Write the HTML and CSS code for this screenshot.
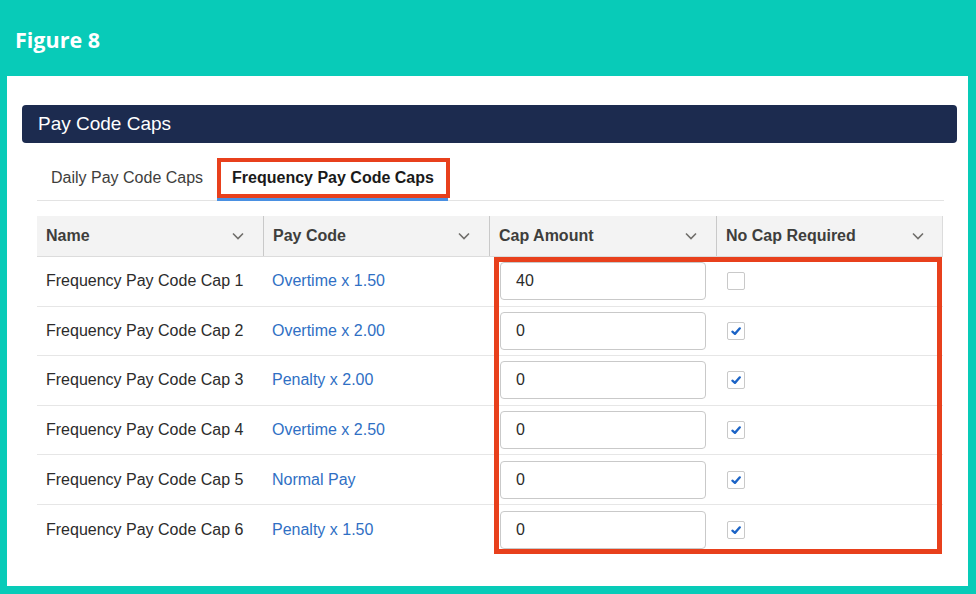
FILE: index.html
```html
<!DOCTYPE html>
<html>
<head>
<meta charset="utf-8">
<link rel="stylesheet" href="styles.css">
</head>
<body>
<div class="frame">
  <div class="figure-header">Figure 8</div>
  <div class="card">
    <div class="title-bar">Pay Code Caps</div>
    <div class="tabs">
      <div class="tab">Daily Pay Code Caps</div>
      <div class="tab tab-active"><span class="tab-label">Frequency Pay Code Caps</span></div>
    </div>
    <div class="table">
      <div class="thead">
        <div class="th"><span>Name</span><svg class="chev" viewBox="0 0 12 8"><path d="M1 1.5 L6 6.5 L11 1.5"/></svg></div>
        <div class="th"><span>Pay Code</span><svg class="chev" viewBox="0 0 12 8"><path d="M1 1.5 L6 6.5 L11 1.5"/></svg></div>
        <div class="th"><span>Cap Amount</span><svg class="chev" viewBox="0 0 12 8"><path d="M1 1.5 L6 6.5 L11 1.5"/></svg></div>
        <div class="th"><span>No Cap Required</span><svg class="chev" viewBox="0 0 12 8"><path d="M1 1.5 L6 6.5 L11 1.5"/></svg></div>
      </div>
      <div class="tbody">
        <div class="tr">
          <div class="td">Frequency Pay Code Cap 1</div>
          <div class="td link">Overtime x 1.50</div>
          <div class="td"><div class="input">40</div></div>
          <div class="td"><span class="cb"></span></div>
        </div>
        <div class="tr">
          <div class="td">Frequency Pay Code Cap 2</div>
          <div class="td link">Overtime x 2.00</div>
          <div class="td"><div class="input">0</div></div>
          <div class="td"><span class="cb"><svg viewBox="0 0 10 10"><path d="M2 5.6 L4.1 7.4 L8.2 2.8"/></svg></span></div>
        </div>
        <div class="tr">
          <div class="td">Frequency Pay Code Cap 3</div>
          <div class="td link">Penalty x 2.00</div>
          <div class="td"><div class="input">0</div></div>
          <div class="td"><span class="cb"><svg viewBox="0 0 10 10"><path d="M2 5.6 L4.1 7.4 L8.2 2.8"/></svg></span></div>
        </div>
        <div class="tr">
          <div class="td">Frequency Pay Code Cap 4</div>
          <div class="td link">Overtime x 2.50</div>
          <div class="td"><div class="input">0</div></div>
          <div class="td"><span class="cb"><svg viewBox="0 0 10 10"><path d="M2 5.6 L4.1 7.4 L8.2 2.8"/></svg></span></div>
        </div>
        <div class="tr">
          <div class="td">Frequency Pay Code Cap 5</div>
          <div class="td link">Normal Pay</div>
          <div class="td"><div class="input">0</div></div>
          <div class="td"><span class="cb"><svg viewBox="0 0 10 10"><path d="M2 5.6 L4.1 7.4 L8.2 2.8"/></svg></span></div>
        </div>
        <div class="tr last">
          <div class="td">Frequency Pay Code Cap 6</div>
          <div class="td link">Penalty x 1.50</div>
          <div class="td"><div class="input">0</div></div>
          <div class="td"><span class="cb"><svg viewBox="0 0 10 10"><path d="M2 5.6 L4.1 7.4 L8.2 2.8"/></svg></span></div>
        </div>
        <div class="highlight"></div>
      </div>
    </div>
  </div>
</div>
</body>
</html>
```
FILE: styles.css
```css
html, body {
  margin: 0;
  padding: 0;
}
body {
  background: #08cbb8;
  font-family: "Liberation Sans", Arial, sans-serif;
  color: #2b2b2b;
}
.frame {
  width: 976px;
  height: 594px;
  box-sizing: border-box;
  padding: 0 8px 8px 7px;
  display: flex;
  flex-direction: column;
  background: #08cbb8;
}
.figure-header {
  height: 76px;
  flex: none;
  box-sizing: border-box;
  padding: 26px 0 0 8px;
  font-family: "Open Sans", sans-serif;
  font-weight: 700;
  font-size: 21.5px;
  line-height: 28px;
  color: #ffffff;
}
.card {
  flex: 1;
  background: #ffffff;
  padding: 29px 11px 0 15px;
}
.title-bar {
  height: 38px;
  background: #1c2b4f;
  border-radius: 4px;
  box-sizing: border-box;
  padding-left: 16px;
  font-size: 19px;
  line-height: 38px;
  color: #ffffff;
}
.tabs {
  margin: 0 13px 0 15px;
  height: 58px;
  box-sizing: border-box;
  padding-top: 15px;
  display: flex;
  align-items: flex-start;
  gap: 14px;
  box-shadow: inset 0 -1px 0 #e3e3e3;
}
.tab {
  height: 40px;
  line-height: 40px;
  font-size: 16px;
  color: #3e3e3c;
  padding-left: 14px;
}
.tab-active {
  padding-left: 0;
  height: 43px;
  display: flex;
  flex-direction: column;
}
.tab-label {
  display: block;
  height: 40px;
  box-sizing: border-box;
  border: 4px solid #e8401c;
  padding: 0 12px 0 11px;
  line-height: 32px;
  font-weight: 700;
  color: #1a1a1a;
}
.tab-active::after {
  content: "";
  display: block;
  height: 3px;
  background: #4a90e2;
  margin-right: 2px;
}
.table {
  margin: 15px 14px 0 15px;
}
.thead {
  display: grid;
  grid-template-columns: 226px 226px 227px 227px;
  height: 41px;
  background: #f3f3f3;
  border-bottom: 1px solid #dcdcdc;
  box-sizing: border-box;
}
.th {
  display: flex;
  align-items: center;
  justify-content: space-between;
  padding: 0 19px 0 9px;
  font-size: 16px;
  font-weight: 700;
  color: #3e3e3c;
  border-left: 1px solid #c9c9c9;
}
.th:first-child {
  border-left: none;
}
.th:last-child {
  border-right: 1px solid #dcdcdc;
  padding-right: 18px;
}
.chev {
  width: 12px;
  height: 8px;
  fill: none;
  stroke: #706e6b;
  stroke-width: 1.6;
}
.tbody {
  position: relative;
}
.tr {
  display: grid;
  grid-template-columns: 226px 226px 227px 227px;
  height: 49.6px;
  box-sizing: border-box;
  border-bottom: 1px solid #e6e6e6;
}
.tr.last {
  border-bottom: none;
}
.td {
  display: flex;
  align-items: center;
  padding-left: 9px;
  font-size: 16px;
  color: #2b2b2b;
}
.td.link {
  color: #2f6fc4;
}
.td:nth-child(3), .td:nth-child(4) {
  padding-left: 11px;
}
.input {
  width: 206px;
  height: 38px;
  box-sizing: border-box;
  border: 1px solid #c9c9c9;
  border-radius: 4px;
  padding-left: 15px;
  line-height: 36px;
  font-size: 16px;
  color: #2b2b2b;
  background: #ffffff;
}
.cb {
  width: 18px;
  height: 18px;
  box-sizing: border-box;
  border: 1px solid #c9c9c9;
  border-radius: 2px;
  display: flex;
  align-items: center;
  justify-content: center;
  background: #ffffff;
}
.cb svg {
  width: 12px;
  height: 12px;
  fill: none;
  stroke: #1b63c6;
  stroke-width: 1.9;
  stroke-linecap: round;
  stroke-linejoin: round;
}
.highlight {
  position: absolute;
  left: 457px;
  top: 0;
  width: 448px;
  height: 297px;
  box-sizing: border-box;
  border: 5px solid #e8401c;
  pointer-events: none;
}
```
